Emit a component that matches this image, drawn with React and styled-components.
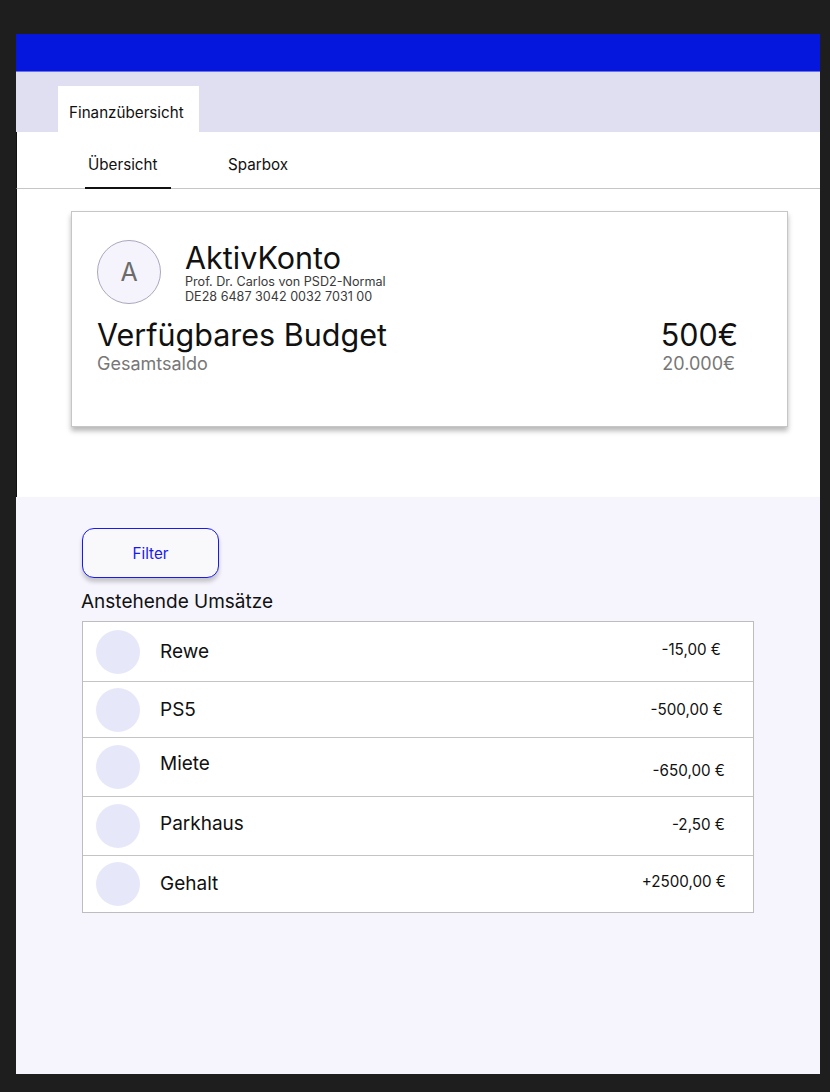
import React from "react";
import styled, { createGlobalStyle } from "styled-components";

const Global = createGlobalStyle`
  html, body { margin: 0; padding: 0; background: #1e1e1e; }
  body { font-family: Inter, "Noto Sans", sans-serif; }
  * { box-sizing: border-box; }
`;

const Frame = styled.div`
  margin: 34px 0 0 16px;
  width: 804px;
  height: 1040px;
  display: flex;
  flex-direction: column;
  background: #ffffff;
`;

const TopBar = styled.div`
  height: 38px;
  background: #0517dd;
  border-bottom: 1px solid #6c72e6;
`;

const TabBand = styled.div`
  height: 60px;
  background: #e0dff1;
  display: flex;
  align-items: flex-end;
  padding-left: 42px;
`;

const Tab = styled.div`
  width: 141px;
  height: 46px;
  background: #ffffff;
  display: flex;
  align-items: flex-end;
  padding: 0 0 10px 11px;
  font-size: 15.2px;
  color: #111;
`;

const Nav = styled.nav`
  height: 57px;
  display: flex;
  align-items: stretch;
  gap: 49px;
  padding-left: 68px;
  border-bottom: 1px solid #c6c6c6;
  border-left: 1px solid #111;
`;

const NavItem = styled.div`
  width: 86px;
  display: flex;
  align-items: center;
  padding: 10px 0 0 ${(p) => (p.$active ? "3px" : "8px")};
  font-size: 15.2px;
  color: #111;
  border-bottom: 2px solid ${(p) => (p.$active ? "#111" : "transparent")};
  margin-bottom: -1px;
`;

const TopSection = styled.section`
  height: 308px;
  padding: 22px 0 0 54px;
  border-left: 1px solid #111;
`;

const Card = styled.div`
  width: 717px;
  height: 216px;
  border: 1px solid #c9c5c5;
  box-shadow: 0 4px 5px rgba(0, 0, 0, 0.28);
  background: #fff;
  padding: 28px 49px 0 25px;
  display: flex;
  flex-direction: column;
`;

const AccountRow = styled.div`
  display: flex;
  align-items: flex-start;
  gap: 24px;
`;

const Avatar = styled.div`
  width: 64px;
  height: 64px;
  border-radius: 50%;
  background: #f5f4fc;
  border: 1px solid #aca6be;
  display: flex;
  align-items: center;
  justify-content: center;
  font-size: 25px;
  color: #6b6b6b;
`;

const AccountText = styled.div`
  display: flex;
  flex-direction: column;
  padding-top: 1px;
`;

const AccountTitle = styled.div`
  font-size: 30.5px;
  line-height: 34px;
  color: #111;
`;

const AccountMeta = styled.div`
  font-size: 12.6px;
  line-height: 14.5px;
  color: #3a3a3a;
`;

const BudgetRow = styled.div`
  display: flex;
  justify-content: space-between;
  margin-top: 13px;
`;

const BudgetCol = styled.div`
  display: flex;
  flex-direction: column;
  align-items: ${(p) => (p.$right ? "flex-end" : "flex-start")};
`;

const BigText = styled.div`
  font-size: 30.5px;
  line-height: 36px;
  color: #111;
`;

const SubText = styled.div`
  font-size: 18px;
  line-height: 22px;
  color: #777;
  margin-right: ${(p) => (p.$right ? "3px" : "0")};
`;

const LowerSection = styled.section`
  flex: 1;
  background: #f6f5fd;
  padding: 31px 0 0 66px;
  display: flex;
  flex-direction: column;
  align-items: flex-start;
`;

const FilterButton = styled.button`
  width: 137px;
  height: 50px;
  border: 1.5px solid #1a1aee;
  border-radius: 12px;
  background: #f9f9fb;
  box-shadow: 0 4px 4px rgba(0, 0, 0, 0.2);
  font-family: inherit;
  font-size: 15.2px;
  color: #1a1aee;
  cursor: pointer;
`;

const SectionTitle = styled.h2`
  margin: 12px 0 8px -1px;
  font-weight: 400;
  font-size: 19px;
  line-height: 23px;
  color: #111;
`;

const List = styled.div`
  width: 672px;
  border: 1px solid #bdbdbd;
  background: #fff;
  display: flex;
  flex-direction: column;
`;

const Row = styled.div`
  height: ${(p) => p.$h}px;
  display: flex;
  align-items: center;
  padding: 0 0 0 13px;
  border-top: ${(p) => (p.$first ? "none" : "1px solid #c4c4c4")};
`;

const Dot = styled.div`
  width: 44px;
  height: 44px;
  border-radius: 50%;
  background: #e6e8fa;
  flex-shrink: 0;
`;

const Name = styled.div`
  flex: 1;
  margin-left: 20px;
  font-size: 19px;
  color: #111;
  transform: translateY(${(p) => p.$dy || 0}px);
`;

const Amount = styled.div`
  font-size: 15.2px;
  color: #111;
  margin-right: ${(p) => p.$mr}px;
  transform: translateY(${(p) => p.$dy || 0}px);
`;

const rows = [
  { name: "Rewe", amount: "-15,00 €", h: 59, mr: 32, ady: -2 },
  { name: "PS5", amount: "-500,00 €", h: 56, mr: 30 },
  { name: "Miete", amount: "-650,00 €", h: 59, mr: 28, ndy: -4, ady: 3 },
  { name: "Parkhaus", amount: "-2,50 €", h: 59, mr: 28, ndy: -3, ady: -2 },
  { name: "Gehalt", amount: "+2500,00 €", h: 57, mr: 27, ndy: -1, ady: -3 },
];

export default function App() {
  return (
    <>
      <Global />
      <Frame>
        <TopBar />
        <TabBand>
          <Tab>Finanzübersicht</Tab>
        </TabBand>
        <Nav>
          <NavItem $active>Übersicht</NavItem>
          <NavItem>Sparbox</NavItem>
        </Nav>
        <TopSection>
          <Card>
            <AccountRow>
              <Avatar>A</Avatar>
              <AccountText>
                <AccountTitle>AktivKonto</AccountTitle>
                <AccountMeta>Prof. Dr. Carlos von PSD2-Normal</AccountMeta>
                <AccountMeta>DE28 6487 3042 0032 7031 00</AccountMeta>
              </AccountText>
            </AccountRow>
            <BudgetRow>
              <BudgetCol>
                <BigText>Verfügbares Budget</BigText>
                <SubText>Gesamtsaldo</SubText>
              </BudgetCol>
              <BudgetCol $right>
                <BigText>500€</BigText>
                <SubText $right>20.000€</SubText>
              </BudgetCol>
            </BudgetRow>
          </Card>
        </TopSection>
        <LowerSection>
          <FilterButton>Filter</FilterButton>
          <SectionTitle>Anstehende Umsätze</SectionTitle>
          <List>
            {rows.map((r, i) => (
              <Row key={r.name} $h={r.h} $first={i === 0}>
                <Dot />
                <Name $dy={r.ndy}>{r.name}</Name>
                <Amount $dy={r.ady} $mr={r.mr}>{r.amount}</Amount>
              </Row>
            ))}
          </List>
        </LowerSection>
      </Frame>
    </>
  );
}
